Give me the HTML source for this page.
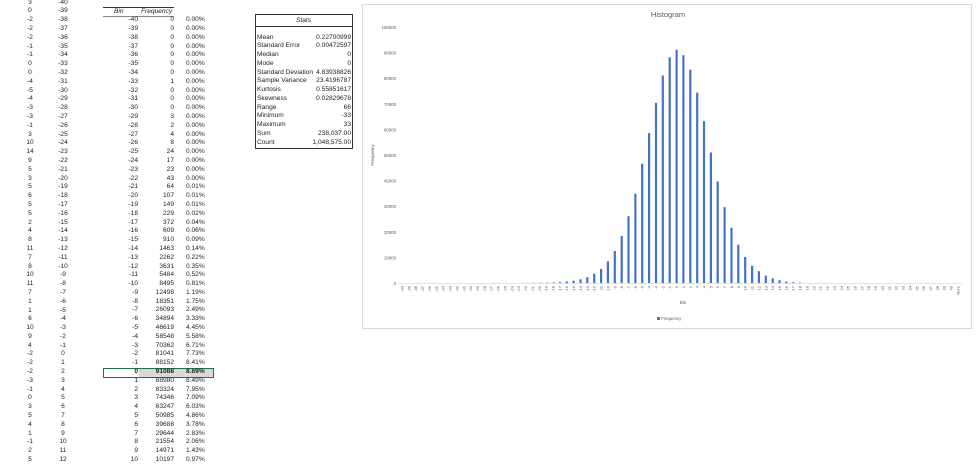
<!DOCTYPE html>
<html><head><meta charset="utf-8"><style>
body{margin:0;width:980px;height:465px;background:#fff;position:relative;overflow:hidden;font-family:"Liberation Sans",sans-serif;font-size:6.6px;color:#222}
.col{position:absolute;top:-1.4px;line-height:8.79px;white-space:pre}
.c{text-align:center}.r{text-align:right}
</style></head><body>
<div class="col c" style="left:18px;width:24px">3
0
-2
-2
-2
-1
-1
0
0
-4
-5
-4
-3
-3
-1
3
10
14
9
5
3
5
6
5
5
2
4
8
11
7
8
10
11
7
1
1
6
10
9
4
-2
-2
-2
-3
-1
0
3
5
4
1
-1
2
5</div>
<div class="col c" style="left:50px;width:26px">-40
-39
-38
-37
-36
-35
-34
-33
-32
-31
-30
-29
-28
-27
-26
-25
-24
-23
-22
-21
-20
-19
-18
-17
-16
-15
-14
-13
-12
-11
-10
-9
-8
-7
-6
-5
-4
-3
-2
-1
0
1
2
3
4
5
6
7
8
9
10
11
12</div>
<div style="position:absolute;left:103px;top:7px;width:71px;border-top:1px solid #333"></div>
<div style="position:absolute;left:103px;top:16px;width:71px;border-top:1px solid #888"></div>
<div style="position:absolute;left:114px;top:7px;font-style:italic;line-height:9px">Bin</div>
<div style="position:absolute;left:141px;top:7px;font-style:italic;line-height:9px">Frequency</div>
<div style="position:absolute;left:103px;top:367.5px;width:109px;height:8px;border:1px solid #217346"></div>
<div style="position:absolute;left:139px;top:368.5px;width:74px;height:8px;background:#d9d9d9"></div>
<div class="col r" style="left:100px;width:38px;top:16.2px">-40
-39
-38
-37
-36
-35
-34
-33
-32
-31
-30
-29
-28
-27
-26
-25
-24
-23
-22
-21
-20
-19
-18
-17
-16
-15
-14
-13
-12
-11
-10
-9
-8
-7
-6
-5
-4
-3
-2
-1
<b>0</b>
1
2
3
4
5
6
7
8
9
10</div>
<div class="col r" style="left:140px;width:34px;top:16.2px">0
0
0
0
0
0
0
1
0
0
0
3
2
4
8
24
17
23
43
64
107
149
229
372
609
910
1463
2262
3631
5484
8495
12498
18351
26093
34894
46619
58548
70362
81041
88152
<b>91088</b>
88980
83324
74346
63247
50985
39688
29644
21554
14971
10197</div>
<div class="col" style="left:186px;top:16.2px">0.00%
0.00%
0.00%
0.00%
0.00%
0.00%
0.00%
0.00%
0.00%
0.00%
0.00%
0.00%
0.00%
0.00%
0.00%
0.00%
0.00%
0.00%
0.00%
0.01%
0.01%
0.01%
0.02%
0.04%
0.06%
0.09%
0.14%
0.22%
0.35%
0.52%
0.81%
1.19%
1.75%
2.49%
3.33%
4.45%
5.58%
6.71%
7.73%
8.41%
<b>8.69%</b>
8.49%
7.95%
7.09%
6.03%
4.86%
3.78%
2.83%
2.06%
1.43%
0.97%</div>
<div style="position:absolute;left:255px;top:14px;width:96px;height:133px;border:1px solid #333"></div>
<div style="position:absolute;left:255px;top:26px;width:97px;border-top:1px solid #333"></div>
<div style="position:absolute;left:255px;top:16px;width:97px;text-align:center;font-style:italic;line-height:9px">Stats</div>
<div class="col" style="left:257px;top:33.6px;line-height:8.75px">Mean
Standard Error
Median
Mode
Standard Deviation
Sample Variance
Kurtosis
Skewness
Range
Minimum
Maximum
Sum
Count</div>
<div class="col r" style="left:290px;width:61px;top:33.6px;line-height:8.75px">0.22700999
0.00472597
0
0
4.83938826
23.4196787
0.55851617
0.02829678
66
-33
33
238,037.00
1,048,575.00</div>
<svg style="position:absolute;left:0;top:0" width="980" height="465" font-family="Liberation Sans, sans-serif">
<rect x="362.5" y="4.5" width="609" height="324" fill="#fff" stroke="#d9d9d9"/>
<text x="668" y="17" font-size="7.5" fill="#595959" text-anchor="middle">Histogram</text>
<g font-size="4.3" fill="#595959" text-anchor="end">
<text x="396" y="29">100000</text><text x="396" y="54.5">90000</text><text x="396" y="80">80000</text><text x="396" y="105.8">70000</text><text x="396" y="131.4">60000</text><text x="396" y="157">50000</text><text x="396" y="182.6">40000</text><text x="396" y="208.2">30000</text><text x="396" y="233.8">20000</text><text x="396" y="259.4">10000</text><text x="396" y="285">0</text>
</g>
<text transform="translate(374,155) rotate(-90)" font-size="4.5" fill="#595959" text-anchor="middle">Frequency</text>
<text x="683" y="304" font-size="4.5" fill="#595959" text-anchor="middle">Bin</text>
<rect x="657" y="317" width="3" height="3" fill="#4472c4"/>
<text x="661" y="320" font-size="4.3" fill="#595959">Frequency</text>
<line x1="398" y1="283.5" x2="962" y2="283.5" stroke="#d9d9d9" stroke-width="0.7"/>
<g fill="#4472c4">
<rect x="504.9" y="282.9" width="2.2" height="0.1"/><rect x="525.5" y="282.9" width="2.2" height="0.1"/>
<rect x="532.3" y="282.8" width="2.2" height="0.2"/><rect x="539.2" y="282.7" width="2.2" height="0.3"/>
<rect x="546.1" y="282.6" width="2.2" height="0.4"/><rect x="552.9" y="282.4" width="2.2" height="0.6"/>
<rect x="558.8" y="282" width="2.2" height="1"/><rect x="565.6" y="281.4" width="2.2" height="1.6"/>
<rect x="572.5" y="280.7" width="2.2" height="2.3"/><rect x="579.4" y="279.3" width="2.2" height="3.7"/>
<rect x="586.2" y="277.2" width="2.2" height="5.8"/><rect x="593.1" y="273.7" width="2.2" height="9.3"/>
<rect x="600" y="269" width="2.2" height="14"/><rect x="606.8" y="261.3" width="2.2" height="21.7"/>
<rect x="613.7" y="251" width="2.2" height="32"/><rect x="620.6" y="236" width="2.2" height="47"/>
<rect x="627.4" y="216.2" width="2.2" height="66.8"/><rect x="634.3" y="193.7" width="2.2" height="89.3"/>
<rect x="641.1" y="163.7" width="2.2" height="119.3"/><rect x="648" y="133.1" width="2.2" height="149.9"/>
<rect x="654.9" y="102.9" width="2.2" height="180.1"/><rect x="661.7" y="75.5" width="2.2" height="207.5"/>
<rect x="668.6" y="57.3" width="2.2" height="225.7"/><rect x="675.5" y="49.8" width="2.2" height="233.2"/>
<rect x="682.3" y="55.2" width="2.2" height="227.8"/><rect x="689.2" y="69.7" width="2.2" height="213.3"/>
<rect x="696.1" y="92.7" width="2.2" height="190.3"/><rect x="702.9" y="121.1" width="2.2" height="161.9"/>
<rect x="709.8" y="152.5" width="2.2" height="130.5"/><rect x="716.6" y="181.4" width="2.2" height="101.6"/>
<rect x="723.5" y="207.1" width="2.2" height="75.9"/><rect x="730.4" y="227.8" width="2.2" height="55.2"/>
<rect x="737.2" y="244.7" width="2.2" height="38.3"/><rect x="744.1" y="256.9" width="2.2" height="26.1"/>
<rect x="751" y="265.8" width="2.2" height="17.2"/><rect x="757.8" y="271.2" width="2.2" height="11.8"/>
<rect x="764.7" y="275.6" width="2.2" height="7.4"/><rect x="771.6" y="278.4" width="2.2" height="4.6"/>
<rect x="778.4" y="280.2" width="2.2" height="2.8"/><rect x="785.3" y="281.5" width="2.2" height="1.5"/>
<rect x="792.1" y="282.2" width="2.2" height="0.8"/><rect x="799" y="282.6" width="2.2" height="0.4"/>
</g>
<g font-size="4" fill="#595959" text-anchor="end">
<text transform="translate(403.5,286) rotate(-90)">-40</text><text transform="translate(410.4,286) rotate(-90)">-39</text><text transform="translate(417.2,286) rotate(-90)">-38</text><text transform="translate(424.1,286) rotate(-90)">-37</text><text transform="translate(431,286) rotate(-90)">-36</text><text transform="translate(437.8,286) rotate(-90)">-35</text><text transform="translate(444.7,286) rotate(-90)">-34</text><text transform="translate(451.6,286) rotate(-90)">-33</text><text transform="translate(458.4,286) rotate(-90)">-32</text><text transform="translate(465.3,286) rotate(-90)">-31</text><text transform="translate(472.1,286) rotate(-90)">-30</text><text transform="translate(479,286) rotate(-90)">-29</text><text transform="translate(485.9,286) rotate(-90)">-28</text><text transform="translate(492.7,286) rotate(-90)">-27</text><text transform="translate(499.6,286) rotate(-90)">-26</text><text transform="translate(506.5,286) rotate(-90)">-25</text><text transform="translate(513.3,286) rotate(-90)">-24</text><text transform="translate(520.2,286) rotate(-90)">-23</text><text transform="translate(527.1,286) rotate(-90)">-22</text><text transform="translate(533.9,286) rotate(-90)">-21</text><text transform="translate(540.8,286) rotate(-90)">-20</text><text transform="translate(547.7,286) rotate(-90)">-19</text><text transform="translate(554.5,286) rotate(-90)">-18</text><text transform="translate(561.4,286) rotate(-90)">-17</text><text transform="translate(568.2,286) rotate(-90)">-16</text><text transform="translate(575.1,286) rotate(-90)">-15</text><text transform="translate(582,286) rotate(-90)">-14</text><text transform="translate(588.8,286) rotate(-90)">-13</text><text transform="translate(595.7,286) rotate(-90)">-12</text><text transform="translate(602.6,286) rotate(-90)">-11</text><text transform="translate(609.4,286) rotate(-90)">-10</text><text transform="translate(616.3,286) rotate(-90)">-9</text><text transform="translate(623.2,286) rotate(-90)">-8</text><text transform="translate(630,286) rotate(-90)">-7</text><text transform="translate(636.9,286) rotate(-90)">-6</text><text transform="translate(643.7,286) rotate(-90)">-5</text><text transform="translate(650.6,286) rotate(-90)">-4</text><text transform="translate(657.5,286) rotate(-90)">-3</text><text transform="translate(664.3,286) rotate(-90)">-2</text><text transform="translate(671.2,286) rotate(-90)">-1</text><text transform="translate(678.1,286) rotate(-90)">0</text><text transform="translate(684.9,286) rotate(-90)">1</text><text transform="translate(691.8,286) rotate(-90)">2</text><text transform="translate(698.7,286) rotate(-90)">3</text><text transform="translate(705.5,286) rotate(-90)">4</text><text transform="translate(712.4,286) rotate(-90)">5</text><text transform="translate(719.2,286) rotate(-90)">6</text><text transform="translate(726.1,286) rotate(-90)">7</text><text transform="translate(733,286) rotate(-90)">8</text><text transform="translate(739.8,286) rotate(-90)">9</text><text transform="translate(746.7,286) rotate(-90)">10</text><text transform="translate(753.6,286) rotate(-90)">11</text><text transform="translate(760.4,286) rotate(-90)">12</text><text transform="translate(767.3,286) rotate(-90)">13</text><text transform="translate(774.2,286) rotate(-90)">14</text><text transform="translate(781,286) rotate(-90)">15</text><text transform="translate(787.9,286) rotate(-90)">16</text><text transform="translate(794.7,286) rotate(-90)">17</text><text transform="translate(801.6,286) rotate(-90)">18</text><text transform="translate(808.5,286) rotate(-90)">19</text><text transform="translate(815.3,286) rotate(-90)">20</text><text transform="translate(822.2,286) rotate(-90)">21</text><text transform="translate(829.1,286) rotate(-90)">22</text><text transform="translate(835.9,286) rotate(-90)">23</text><text transform="translate(842.8,286) rotate(-90)">24</text><text transform="translate(849.7,286) rotate(-90)">25</text><text transform="translate(856.5,286) rotate(-90)">26</text><text transform="translate(863.4,286) rotate(-90)">27</text><text transform="translate(870.2,286) rotate(-90)">28</text><text transform="translate(877.1,286) rotate(-90)">29</text><text transform="translate(884,286) rotate(-90)">30</text><text transform="translate(890.8,286) rotate(-90)">31</text><text transform="translate(897.7,286) rotate(-90)">32</text><text transform="translate(904.6,286) rotate(-90)">33</text><text transform="translate(911.4,286) rotate(-90)">34</text><text transform="translate(918.3,286) rotate(-90)">35</text><text transform="translate(925.2,286) rotate(-90)">36</text><text transform="translate(932,286) rotate(-90)">37</text><text transform="translate(938.9,286) rotate(-90)">38</text><text transform="translate(945.7,286) rotate(-90)">39</text><text transform="translate(952.6,286) rotate(-90)">40</text><text transform="translate(959.5,286) rotate(-90)">More</text>
</g>
</svg>
</body></html>
